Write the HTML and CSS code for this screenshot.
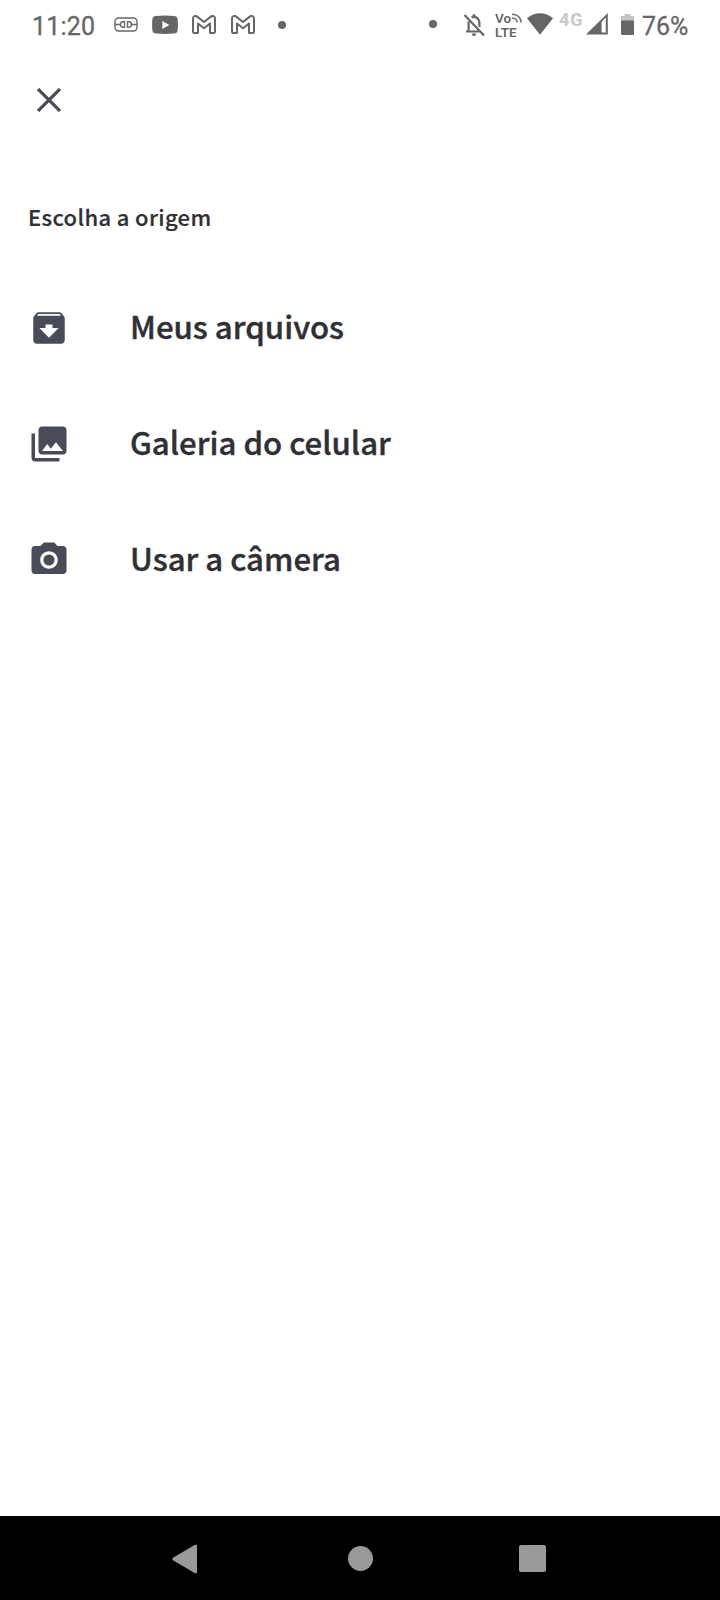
FILE: index.html
```html
<!DOCTYPE html>
<html lang="pt-BR">
<head>
<meta charset="utf-8">
<title>Escolha a origem</title>
<link rel="stylesheet" href="styles.css">
</head>
<body>
<div class="screen">
  <header class="status">
    <div class="status-left">
      <span class="clock">11:20</span>
      <svg class="plug" width="24" height="15" viewBox="0 0 24 15" fill="none" stroke="currentColor" stroke-width="1.400"><rect x="1" y="1" width="22" height="13" rx="3.5"/><path d="M1 7.500H6.500M17.500 7.500H23M10.500 4.800v5.400H9Q6.500 10 6.500 7.500T9 4.800zM13.500 4.800v5.400H15Q17.500 10 17.500 7.500T15 4.800z"/></svg>
      <svg class="youtube" width="26" height="20" viewBox="0 0 26 20"><path fill="currentColor" d="M4 .9Q13 .1 22 .9Q25.300 1.200 25.600 4Q26.200 10 25.600 15.500Q25.300 18.300 22 18.600Q13 19.400 4 18.600Q.8 18.300.4 15.500Q-.2 10 .4 4Q.8 1.200 4 .9z"/><path fill="#fff" d="M10.300 6v8l7-4z"/></svg>
      <svg class="mail" width="24" height="20" viewBox="0 0 24 20"><use href="#m"/></svg>
      <svg class="mail" width="24" height="20" viewBox="0 0 24 20"><path id="m" fill="none" stroke="currentColor" stroke-width="2" stroke-linejoin="round" d="M1 16.800V3.200C1 1 3.500.3 5.200 1.600L12 7l6.800-5.400C20.500.3 23 1 23 3.200v13.600q0 1.200-1.200 1.200H18V8.500l-6 4.700-6-4.700V18H2.200Q1 18 1 16.800z"/></svg>
      <span class="dot"></span>
    </div>
    <div class="status-right">
      <span class="dot"></span>
      <svg class="bell" width="23" height="24" viewBox="0 0 23 24" fill="none" stroke="currentColor"><path stroke-width="2.200" d="M1.500 2L21 22.500M5.600 8.500V18M3 18.500H17M8.500 4.500Q11 3.200 13.500 4.500Q16.400 6.500 16.400 10.500V14"/><path fill="currentColor" stroke="none" d="M9.600 1.800Q11 .2 12.400 1.800V4H9.600zM8.700 20.500h4.600q-.4 2.500-2.300 2.500t-2.300-2.500z"/></svg>
      <div class="volte">
        <div class="volte-top"><span>Vo</span><svg width="11" height="11" viewBox="0 0 11 11" fill="none" stroke="currentColor" stroke-width="1.400"><path d="M0 1.200Q8.500 1.500 9.200 9.500M0 5Q4.800 5.300 5.300 9.500"/></svg></div>
        <span>LTE</span>
      </div>
      <svg class="wifi" width="26" height="22" viewBox="0 0 26 22"><path fill="currentColor" d="M0 5.200Q6 .2 13 .2T26 5.200L13 21.800z"/></svg>
      <span class="network">4G</span>
      <svg class="signal" width="22" height="22" viewBox="0 0 22 22"><path fill="currentColor" fill-rule="evenodd" d="M0 21.500L21.800 0V21.500zM15.600 8.700V19.500H19.800V4.500z"/></svg>
      <svg class="battery" width="13" height="21" viewBox="0 0 13 21"><path fill="#c4c4c4" d="M3.500 0h6v2H13v5H0V2h3.500z"/><path fill="currentColor" d="M0 6.500h13V20q0 1-1 1H1q-1 0-1-1z"/></svg>
      <span class="percent">76%</span>
    </div>
  </header>
  <main class="content">
    <button class="close" aria-label="Fechar"><svg width="24" height="24" viewBox="0 0 24 24"><path d="M1 1L23 23M23 1L1 23" stroke="currentColor" stroke-width="3.200"/></svg></button>
    <h1 class="title">Escolha a origem</h1>
    <ul class="sources">
      <li class="source"><svg class="icon" viewBox="0 0 24 24"><path fill="currentColor" d="M20.540 5.230l-1.390-1.680C18.880 3.210 18.470 3 18 3H6c-.47 0-.88.210-1.160.55L3.460 5.230C3.170 5.570 3 6.020 3 6.500V19c0 1.100.9 2 2 2h14c1.100 0 2-.9 2-2V6.500c0-.48-.17-.93-.46-1.270zM12 17.500L6.500 12H10v-2h4v2h3.500L12 17.500zM5.120 5l.81-1h12l.94 1H5.120z"/></svg><span class="label">Meus arquivos</span></li>
      <li class="source"><svg class="icon" viewBox="0 0 24 24"><path fill="currentColor" d="M22 16V4c0-1.100-.9-2-2-2H8c-1.100 0-2 .9-2 2v12c0 1.100.9 2 2 2h12c1.100 0 2-.9 2-2zm-11-4l2.030 2.710L16 11l4 5H8l3-4zM2 6v14c0 1.100.9 2 2 2h14v-2H4V6H2z"/></svg><span class="label">Galeria do celular</span></li>
      <li class="source"><svg class="icon" viewBox="0 0 24 24"><circle fill="currentColor" cx="12" cy="12" r="3.200"/><path fill="currentColor" d="M9 2L7.170 4H4c-1.100 0-2 .9-2 2v12c0 1.100.9 2 2 2h16c1.100 0 2-.9 2-2V6c0-1.100-.9-2-2-2h-3.170L15 2H9zm3 15c-2.760 0-5-2.240-5-5s2.240-5 5-5 5 2.240 5 5-2.240 5-5 5z"/></svg><span class="label">Usar a câmera</span></li>
    </ul>
  </main>
  <nav class="navbar">
    <svg width="26" height="30" viewBox="0 0 26 30"><path fill="currentColor" d="M1 13.800L23 .8Q25 .3 25 2V28Q25 29.700 23 29.200L1 16.200Q-.4 15 1 13.800z"/></svg>
    <span class="home"></span>
    <span class="recent"></span>
  </nav>
</div>
</body>
</html>
```
FILE: styles.css
```css
* { box-sizing: border-box; }
body { margin: 0; background: #fff; font-family: "Noto Sans CJK JP", "Noto Sans", sans-serif; color: #2f3035; }
.screen { width: 720px; height: 1600px; display: flex; flex-direction: column; }
svg { display: block; flex: none; }
.status { height: 50px; padding: 0 32px 0 32px; display: flex; justify-content: space-between; color: #666; font-family: Roboto, sans-serif; }
.status-left, .status-right { display: flex; align-items: flex-start; }
.clock, .percent { font-size: 25px; line-height: 30px; margin-top: 12px; -webkit-text-stroke: 0.3px currentColor; }
.clock { width: 63px; letter-spacing: 0.2px; }
.plug { margin: 17px 0 0 19px; }
.youtube { margin: 15px 0 0 14px; }
.mail { margin: 15px 0 0 14px; }
.mail + .mail { margin-left: 15px; }
.dot { width: 8px; height: 8px; border-radius: 50%; background: currentColor; }
.status-left .dot { margin: 21px 0 0 23px; }
.status-right .dot { margin: 20px 0 0; }
.bell { margin: 13px 0 0 26px; }
.volte { margin: 12px 0 0 9px; width: 27px; font-size: 13.5px; font-weight: 600; line-height: 12px; }
.volte > span { display: block; margin-top: 2px; }
.volte-top { display: flex; gap: 1px; height: 12px; }
.volte-top svg { margin-top: 1px; }
.wifi { margin: 13px 0 0 5px; }
.network { margin: 9px 0 0 6px; width: 24px; font-size: 18px; line-height: 22px; font-weight: 700; letter-spacing: 0.8px; color: #c9c9c9; }
.signal { margin: 13px 0 0 3px; }
.battery { margin: 14px 0 0 13px; }
.percent { margin-left: 8px; width: 46px; }
.content { flex: 1; padding: 38px 28px 0; }
.close { display: block; width: 24px; height: 24px; margin-left: 9px; padding: 0; border: 0; background: none; color: #494b58; }
.title { margin: 88px 0 0; font-size: 22px; line-height: 32px; font-weight: 500; letter-spacing: 0.35px; -webkit-text-stroke: 0.2px currentColor; }
.sources { list-style: none; margin: 38px 0 0; padding: 0; }
.source { height: 116px; display: flex; align-items: center; }
.icon { width: 42px; height: 42px; color: #494b58; }
.label { margin: -4px 0 0 60px; font-size: 31.2px; line-height: 48px; font-weight: 500; -webkit-text-stroke: 0.4px currentColor; }
.navbar { height: 84px; background: #000; color: #999; display: flex; align-items: center; justify-content: space-between; padding: 1px 174px 0 172px; }
.home { width: 25px; height: 25px; margin-left: 3px; border-radius: 50%; background: #999; }
.recent { width: 27px; height: 27px; border-radius: 2px; background: #999; }
```
